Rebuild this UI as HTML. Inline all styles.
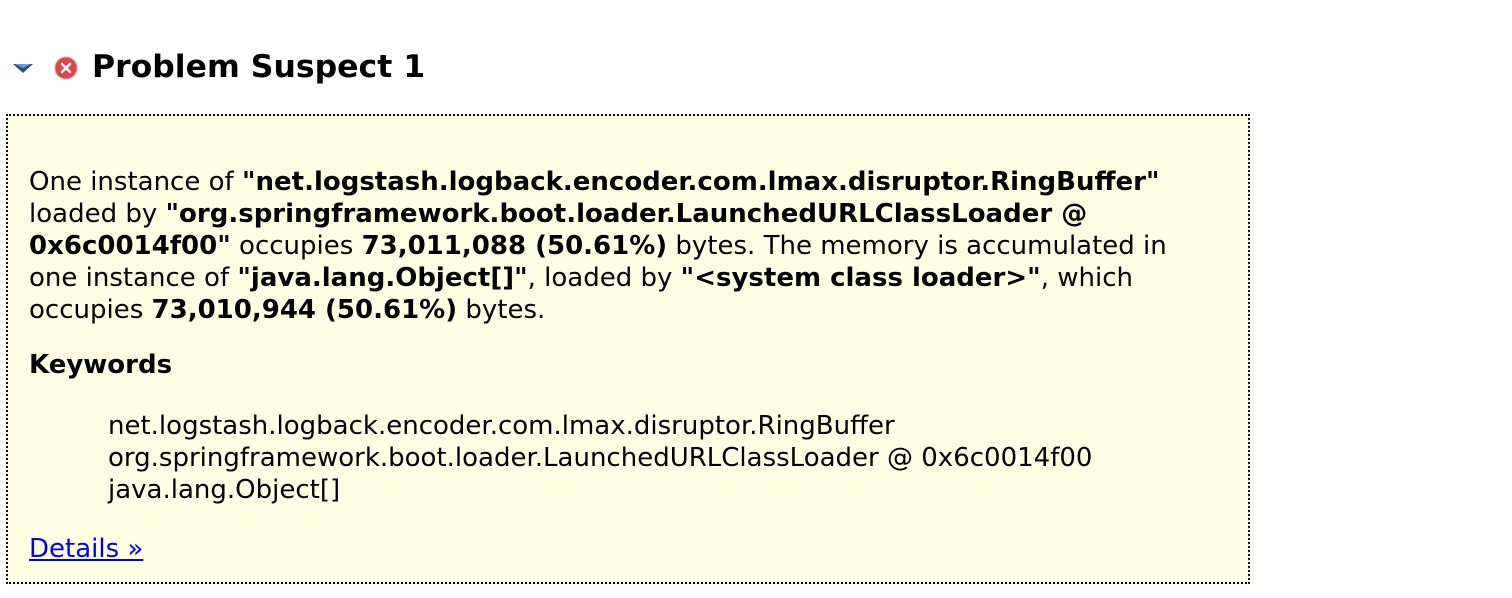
<!DOCTYPE html>
<html><head><meta charset="utf-8"><style>
body{margin:0;background:#fff;font-family:"DejaVu Sans",Verdana,sans-serif;width:1512px;height:598px;overflow:hidden;position:relative;color:#000}
.t{position:absolute;left:92px;top:49px;font-size:31.5px;font-weight:bold;white-space:nowrap}
.box{position:absolute;left:6px;top:114px;width:1240px;height:466px;border:2px dotted #000;background:#ffffe4}
.p{position:absolute;left:21px;top:50px;font-size:26px;line-height:32px;width:1175px}
.k{position:absolute;left:21px;top:234px;font-size:26px;font-weight:bold}
.kw{position:absolute;left:100px;top:294px;font-size:26px;line-height:32px;white-space:nowrap}
.d{position:absolute;left:21px;top:418px;font-size:26px;color:#0000ee;text-decoration:underline}
</style></head><body>
<svg style="position:absolute;left:12px;top:63px" width="22" height="12"><polygon points="1,1 21,1 11,10" fill="#2a4f8a"/><polygon points="3,1 19,1 11,5" fill="#6f9fd6"/></svg>
<svg style="position:absolute;left:54px;top:56px" width="24" height="24"><circle cx="12" cy="12" r="11" fill="#d9474b"/><circle cx="12" cy="12" r="11" fill="none" stroke="#ef9a9a" stroke-width="1"/><path d="M8 8L16 16M16 8L8 16" stroke="#fff" stroke-width="2.5" stroke-linecap="round"/></svg>
<div class="t">Problem Suspect 1</div>
<div class="box">
<div class="p">One instance of <b>"net.logstash.logback.encoder.com.lmax.disruptor.RingBuffer"</b> loaded by <b>"org.springframework.boot.loader.LaunchedURLClassLoader @ 0x6c0014f00"</b> occupies <b>73,011,088 (50.61%)</b> bytes. The memory is accumulated in one instance of <b>"java.lang.Object[]"</b>, loaded by <b>"&lt;system class loader&gt;"</b>, which occupies <b>73,010,944 (50.61%)</b> bytes.</div>
<div class="k">Keywords</div>
<div class="kw">net.logstash.logback.encoder.com.lmax.disruptor.RingBuffer<br>org.springframework.boot.loader.LaunchedURLClassLoader @ 0x6c0014f00<br>java.lang.Object[]</div>
<div class="d">Details »</div>
</div>
</body></html>
